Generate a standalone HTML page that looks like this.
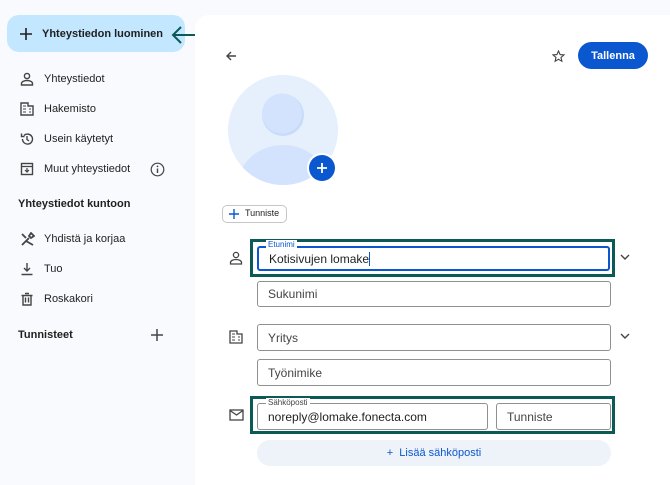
<!DOCTYPE html>
<html><head><meta charset="utf-8"><style>
*{box-sizing:border-box;margin:0;padding:0}
body{width:670px;height:474px;overflow:hidden;background:#f8fafd;font-family:"Liberation Sans",sans-serif;color:#1f1f1f;position:relative}
.a{position:absolute}
.nav{position:absolute;left:44px;font-size:11px;color:#1f1f1f}
.ic{position:absolute;left:20px}
.field{position:absolute;border:1px solid #8e918f;border-radius:3px;background:#fff;font-size:12px;color:#444;padding-left:10px;display:flex;align-items:center}
svg{display:block}
</style></head><body>
<div class="a" style="left:7px;top:15px;width:178px;height:37px;background:#c2e7ff;border-radius:12px"></div>
<svg class="a" style="left:19px;top:27px" width="14" height="14"><path d="M7 1v12M1 7h12" stroke="#1f1f1f" stroke-width="1.6"/></svg>
<div class="a" style="left:42px;top:28px;font-size:11px;font-weight:bold;color:#1f1f1f">Yhteystiedon luominen</div>
<svg class="a" style="left:170px;top:26px" width="36" height="18"><path d="M35 9H3M11 1L3 9l8 8" stroke="#0b5a55" stroke-width="2" fill="none"/></svg>

<svg class="ic" style="top:72px" width="14" height="14"><circle cx="7" cy="4" r="2.6" fill="none" stroke="#444" stroke-width="1.4"/><path d="M1.5 13v-1.5c0-2 3-3 5.5-3s5.5 1 5.5 3V13z" fill="none" stroke="#444" stroke-width="1.4"/></svg>
<div class="nav" style="top:73px">Yhteystiedot</div>
<svg class="ic" style="top:102px" width="14" height="14"><path d="M1 13V1h7v3h5v9z" fill="none" stroke="#444" stroke-width="1.4"/><path d="M3 4h3M3 7h3M3 10h3M9 7h2M9 10h2" stroke="#444"/></svg>
<div class="nav" style="top:103px">Hakemisto</div>
<svg class="ic" style="top:132px" width="14" height="14"><path d="M2.5 7a5 5 0 1 0 1.5-3.5M1.5 1.5v3h3M7 4v3.5l2 1.5" fill="none" stroke="#444" stroke-width="1.4"/></svg>
<div class="nav" style="top:133px">Usein käytetyt</div>
<svg class="ic" style="top:162px" width="14" height="14"><rect x="1.5" y="1.5" width="11" height="11" fill="none" stroke="#444" stroke-width="1.4"/><path d="M1.5 4.5h11M7 6v4M5 8l2 2 2-2" fill="none" stroke="#444" stroke-width="1.2"/></svg>
<div class="nav" style="top:163px">Muut yhteystiedot</div>
<svg class="a" style="left:150px;top:162px" width="15" height="15"><circle cx="7.5" cy="7.5" r="6.3" fill="none" stroke="#444" stroke-width="1.2"/><path d="M7.5 6.5v4.5" stroke="#444" stroke-width="1.4"/><circle cx="7.5" cy="4.4" r=".9" fill="#444"/></svg>
<div class="nav" style="left:18px;top:198px;font-weight:bold">Yhteystiedot kuntoon</div>
<svg class="ic" style="top:232px" width="15" height="15"><path d="M2 13L9 6M6 9l7 4M2 2l4 4M11 1l3 3-3 2-2-2z" fill="none" stroke="#444" stroke-width="1.8"/></svg>
<div class="nav" style="top:233px">Yhdistä ja korjaa</div>
<svg class="ic" style="top:262px" width="14" height="14"><path d="M7 1v8M4 6l3 3 3-3M1.5 12.5h11" fill="none" stroke="#444" stroke-width="1.4"/></svg>
<div class="nav" style="top:263px">Tuo</div>
<svg class="ic" style="top:292px" width="14" height="14"><path d="M3 3.5h8V13H3zM1.5 3.5h11M5 1.5h4M5.5 5.5v5M8.5 5.5v5" fill="none" stroke="#444" stroke-width="1.4"/></svg>
<div class="nav" style="top:293px">Roskakori</div>
<div class="nav" style="left:18px;top:329px;font-weight:bold">Tunnisteet</div>
<svg class="a" style="left:150px;top:328px" width="14" height="14"><path d="M7 1v12M1 7h12" stroke="#444" stroke-width="1.5"/></svg>

<div class="a" style="left:195px;top:15px;width:490px;height:470px;background:#fff;border-radius:14px 0 0 0"></div>
<svg class="a" style="left:225px;top:50px" width="12" height="12"><path d="M11 6H2M6 2L2 6l4 4" fill="none" stroke="#444" stroke-width="1.4"/></svg>
<svg class="a" style="left:552px;top:50px" width="13" height="13"><path d="M6.5 1l1.6 3.6 3.9.3-3 2.6.9 3.8-3.4-2-3.4 2 .9-3.8-3-2.6 3.9-.3z" fill="none" stroke="#444" stroke-width="1.1"/></svg>
<div class="a" style="left:578px;top:42px;width:70px;height:27px;background:#0b57d0;border-radius:14px;color:#fff;font-size:11px;font-weight:bold;display:flex;align-items:center;justify-content:center">Tallenna</div>

<svg class="a" style="left:228px;top:75px" width="112" height="112"><defs><clipPath id="c"><circle cx="55" cy="55" r="55"/></clipPath></defs><circle cx="55" cy="55" r="55" fill="#e6effc"/><g clip-path="url(#c)"><circle cx="55" cy="40" r="21" fill="#c9dcf7"/><circle cx="54" cy="38.5" r="20" fill="#d3e3fd"/><ellipse cx="55" cy="110" rx="45" ry="40" fill="#d3e3fd"/></g><circle cx="94" cy="93" r="15" fill="#fff"/><circle cx="94" cy="93" r="13" fill="#0b57d0"/><path d="M94 88v10M89 93h10" stroke="#fff" stroke-width="1.8"/></svg>

<div class="a" style="left:222px;top:205px;width:65px;height:18px;border:1px solid #c4c7c5;border-radius:5px"></div>
<svg class="a" style="left:229px;top:209px" width="10" height="10"><path d="M5 0v10M0 5h10" stroke="#0b57d0" stroke-width="1.4"/></svg>
<div class="a" style="left:245px;top:208px;font-size:9px">Tunniste</div>

<svg class="a" style="left:229px;top:251px" width="14" height="14"><circle cx="7" cy="4" r="2.6" fill="none" stroke="#444" stroke-width="1.3"/><path d="M1.5 13v-1.5c0-2 3-3 5.5-3s5.5 1 5.5 3V13z" fill="none" stroke="#444" stroke-width="1.3"/></svg>
<div class="a" style="left:250px;top:239px;width:365px;height:38px;border:3px solid #0b5a55"></div>
<div class="field" style="left:257px;top:246px;width:353px;height:25px;border:2px solid #0b57d0;color:#1f1f1f;font-size:12px">Kotisivujen lomake<span style="border-left:1px solid #0b57d0;height:14px"></span></div>
<div class="a" style="left:266px;top:240px;font-size:8px;line-height:9px;color:#0b57d0;background:#fff;padding:0 2px">Etunimi</div>
<svg class="a" style="left:620px;top:254px" width="10" height="7"><path d="M1 1l4 4 4-4" fill="none" stroke="#444" stroke-width="1.4"/></svg>
<div class="field" style="left:257px;top:281px;width:354px;height:26px">Sukunimi</div>

<svg class="a" style="left:229px;top:330px" width="14" height="14"><path d="M1 13V1h7v3h5v9z" fill="none" stroke="#444" stroke-width="1.3"/><path d="M3 4h3M3 7h3M3 10h3M9 7h2M9 10h2" stroke="#444"/></svg>
<div class="field" style="left:257px;top:324px;width:354px;height:27px">Yritys</div>
<svg class="a" style="left:620px;top:333px" width="10" height="7"><path d="M1 1l4 4 4-4" fill="none" stroke="#444" stroke-width="1.4"/></svg>
<div class="field" style="left:257px;top:359px;width:354px;height:27px">Työnimike</div>

<svg class="a" style="left:229px;top:409px" width="15" height="12"><rect x="1" y="1" width="13" height="10" fill="none" stroke="#444" stroke-width="1.3"/><path d="M1 1.5l6.5 4.5 6.5-4.5" fill="none" stroke="#444" stroke-width="1.3"/></svg>
<div class="a" style="left:250px;top:396px;width:365px;height:38px;border:3px solid #0b5a55"></div>
<div class="field" style="left:257px;top:403px;width:231px;height:27px;color:#1f1f1f">noreply@lomake.fonecta.com</div>
<div class="a" style="left:266px;top:398px;font-size:8px;line-height:9px;color:#444;background:#fff;padding:0 2px">Sähköposti</div>
<div class="field" style="left:496px;top:403px;width:115px;height:27px">Tunniste</div>
<div class="a" style="left:257px;top:440px;width:354px;height:26px;background:#eef2f9;border-radius:13px;color:#0b57d0;font-size:11px;text-align:center;line-height:26px">+&nbsp; Lisää sähköposti</div>
</body></html>
